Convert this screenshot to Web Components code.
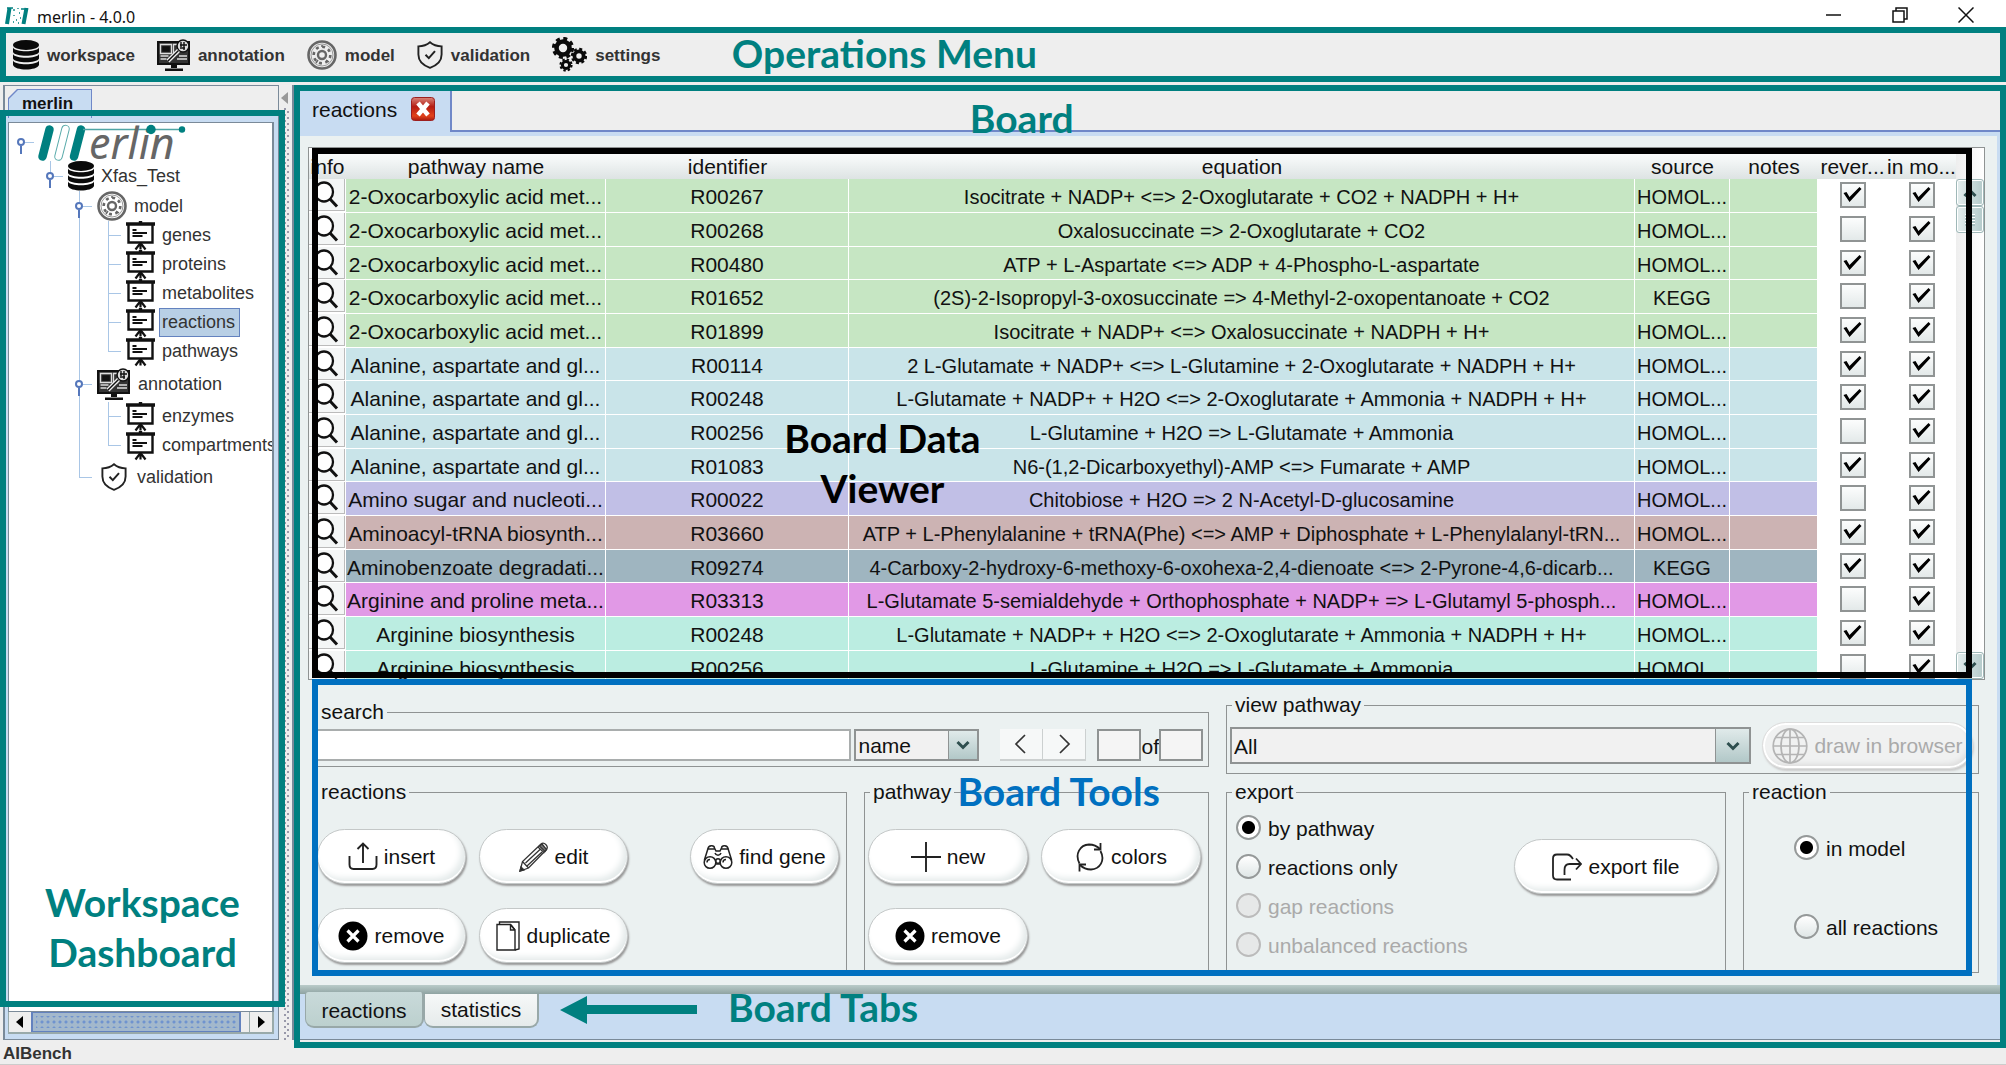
<!DOCTYPE html>
<html lang="en">
<head>
<meta charset="utf-8">
<title>merlin - 4.0.0</title>
<style>
  html, body { margin: 0; height: 100%; }
  body {
    font: 21px/24px "Liberation Sans", Arial, sans-serif;
    color: #111; background: #eee;
    --teal: #008080; --blue: #0070c0; --sky: #c8dcf2; --line: #7088c8;
    --panel: #ebf1f1; --edge: #8f9393;
  }
</style>
</head>
<body>
<merlin-app></merlin-app>
<script>
const ICONS = {
  database: [26, 30, `<g fill="#0a0a0a"><ellipse cx="13" cy="5" rx="13" ry="5"/><path d="M0 7.500c2 5 24 5 26 0v4.500c-2 5-24 5-26 0z"/><path d="M0 14c2 5 24 5 26 0v4.500c-2 5-24 5-26 0z"/><path d="M0 20.500c2 5 24 5 26 0v4.500c-2 6-24 6-26 0z"/></g>`],
  annotation: [33, 32, `<path d="M1 3h31v22H1z" fill="#333"/><g fill="none" stroke="#111" stroke-width="1.600"><path d="M1 3h31v22H1z" stroke-width="2"/><path d="M3.500 5.500h11v9h-11zM16.500 5.500h4v9h-4zM3.500 17h8M3.500 20h6M20 20h10M22 17h8" stroke="#ddd" stroke-width="1.300"/><path d="M6 8h6v4H6z" fill="#111"/><circle cx="26" cy="7" r="6" fill="#ddd"/><path d="M21.500 11.500 11 22" stroke="#eee" stroke-width="4"/><path d="M21.500 11.500 11 22" stroke="#111" stroke-width="1.500"/><path d="M24 3v5M27 3v8M30 6h-7M23 9h5" stroke-width="1.400"/></g><path d="M14 26h6v3h-6zM8 29.500h18V32H8z" fill="#111"/>`],
  model: [30, 30, `<g fill="none" stroke="#666"><circle cx="15" cy="15" r="13.500" stroke-width="2.600"/><circle cx="15" cy="15" r="11" stroke="#999" stroke-width="1"/><circle cx="15" cy="15" r="4" stroke-width="2.400"/><g stroke-width="2.600"><circle cx="15" cy="15" r="8.300" stroke-dasharray="3 3.500"/></g><path d="M11 20l-2 3M19 20l3 2M15 5v2" stroke-width="1.500"/></g>`],
  shield: [26, 28, `<path d="M13 1.200c3 2.600 7 4 11.600 4.200v8.200c0 6.600-5 11-11.600 13.200C6.400 24.600 1.400 20.200 1.400 13.600V5.400C6 5.200 10 3.800 13 1.200z" fill="none" stroke="#222" stroke-width="1.900"/><path d="M8.500 13.800l3.300 3.300 6.200-7" fill="none" stroke="#222" stroke-width="2"/>`],
  gears: [35, 35, `<g fill="none" stroke="#0a0a0a"><circle cx="11" cy="11" r="6.500" stroke-width="4.600"/><circle cx="11" cy="11" r="9.600" stroke-width="3" stroke-dasharray="4 3.540"/><circle cx="27" cy="19" r="4.600" stroke-width="3.800"/><circle cx="27" cy="19" r="7" stroke-width="2.400" stroke-dasharray="3 2.500"/><circle cx="14" cy="28" r="3.600" stroke-width="3"/><circle cx="14" cy="28" r="5.600" stroke-width="2" stroke-dasharray="2.400 2"/></g>`],
  board: [29, 29, `<g fill="none" stroke="#111"><path d="M0 3h29M14.500 0v3" stroke-width="3.400"/><path d="M2.500 4v17.500h24V4" stroke-width="2.400"/><path d="M6.500 9h4M6.500 12h14.500M6.500 15h10" stroke-width="1.800"/><path d="M9.500 28.500l4.500-6h1l4.500 6M14.500 22v6.500" stroke-width="2.200"/></g>`],
  logo: [150, 37, `<g stroke-linecap="round"><path d="M10.500 5.500 3.500 32.500M42 5.500 35 32.500" stroke="#008080" stroke-width="8.500"/><path d="M26.500 5 19.500 32.500" stroke="#5aabab" stroke-width="8.500"/><path d="M26.500 5 19.500 32.500" stroke="#fff" stroke-width="6.500"/></g><path d="M44 5.500h99" stroke="#4fa5a5" stroke-width="1.500"/><text x="50" y="35" font-family="Noto Sans, sans-serif" font-style="italic" font-size="43" fill="#666">erlin</text><circle cx="112" cy="5.500" r="4.700" fill="#008080"/><circle cx="143" cy="5.500" r="3.200" fill="#008080"/>`],
  app: [24, 18, `<g fill="none" stroke="#008080"><path d="M4.500 1 2 17M21.500 1 18.500 17" stroke-width="4"/><path d="M9 2v2M13 1v1M9 8v1M11 13h1M14 6h1M15 11h1M8 15h1M13 16h1" stroke-width="1.300"/><path d="M2 1h6M16 2h7" stroke-width="1.600"/></g>`],
  insert: [30, 30, `<g fill="none" stroke="#222" stroke-width="1.900"><path d="M1.500 14v8.500c0 3 1 4.500 4 4.500h19c3 0 4-1.500 4-4.500V14"/><path d="M15 21V2M9.500 7 15 1.500 20.500 7"/></g>`],
  edit: [30, 30, `<g fill="none" stroke="#333" stroke-width="1.300"><path d="M1 29l2.500-9.500L22 2c3-2.500 8 2 5.500 5.500L9.500 26zM3.500 19.500l6 6.500M19 5l6.500 6M6.500 21 21 7.500M8 24 23 10"/><path d="M1 29l1-4 3 3z" fill="#222"/><path d="M20.500 4l5.500 5.500 1.500-2L23 2z" fill="#777"/></g>`],
  find: [30, 26, `<g fill="none" stroke="#222" stroke-width="1.500"><circle cx="7" cy="18.500" r="5.800"/><circle cx="23" cy="18.500" r="5.800"/><circle cx="15" cy="17" r="2.300"/><path d="M1.400 16 5 4.500c.5-3 6-4 6.500-.5L13 7h4l1.500-3c.5-3.500 6-2.500 6.500.5L28.600 16M5 5h7M18 5h7M12 9c1 3 5 3 6 0M4 18.500c0-2 1-3 3-3M20 18.500c0-2 1-3 3-3M12.500 20h5"/></g>`],
  remove: [30, 30, `<circle cx="15" cy="15" r="14.500" fill="#000"/><path d="M9.500 9.500l11 11M20.500 9.500l-11 11" stroke="#fff" stroke-width="3.200"/>`],
  duplicate: [24, 30, `<g fill="none" stroke="#222" stroke-width="1.400"><path d="M1 3.500h13.500L19 9v20H1z"/><path d="M3.500 3V1H23v27l-4 1M14.500 3.500V9H19M15 4l4 5"/></g>`],
  plus: [30, 30, `<path d="M15 0v30M0 15h30" stroke="#222" stroke-width="1.900"/>`],
  colors: [30, 30, `<g fill="none" stroke="#222" stroke-width="1.800"><path d="M4.500 21.500C-.5 12 5 3 14 2.500c5 0 8 1.500 11 4.500M25.500 9c5 9.500-.5 18-9.500 18.500-5 0-8-1.500-11-4.500"/><path d="M25.500 1v6.500H19M4.500 29.500v-7H11"/></g>`],
  exportfile: [30, 28, `<g fill="none" stroke="#222" stroke-width="1.800"><path d="M21 6c-2-3-3-4.500-6-4.500H5C2 1.500 1 2.500 1 5.500v17c0 3 1 4 4 4h14"/><path d="M12.500 22v-5c0-4 1.500-6 5-6H29M24 5.500l5 5.500-5 5.500"/></g>`],
  globe: [36, 36, `<g fill="none" stroke="#b4b4b4" stroke-width="1.700"><circle cx="18" cy="18" r="16.800"/><ellipse cx="18" cy="18" rx="9" ry="16.800"/><path d="M18 1v34M1 18h34M4 9.500h28M4 26.500h28"/></g>`],
  close: [24, 24, `<defs><linearGradient id="r" x2="0" y2="1"><stop stop-color="#d9857a"/><stop offset=".4" stop-color="#b51c12"/><stop offset=".8" stop-color="#e2431c"/><stop offset="1" stop-color="#a81a10"/></linearGradient></defs><rect x=".5" y=".5" width="23" height="23" rx="3" fill="url(#r)" stroke="#9c1f1f"/><path d="M7 6l10 12M17 6 7 18" stroke="#fff" stroke-width="4.500"/>`],
  search: [30, 30, `<ellipse cx="12" cy="12" rx="9" ry="9.500" fill="#fff" stroke="#111" stroke-width="2.300"/><path d="M17.500 18.500 25 26.500" stroke="#111" stroke-width="3"/>`],
  left: [16, 20, `<path d="M12 1 3 10l9 9" fill="none" stroke="#333" stroke-width="1.700"/>`],
  right: [16, 20, `<path d="M4 1l9 9-9 9" fill="none" stroke="#333" stroke-width="1.700"/>`],
  chevron: [14, 10, `<path d="M1.500 2 7 7.500 12.500 2" fill="none" stroke="#2f4f4f" stroke-width="3"/>`],
  up: [14, 10, `<path d="M1.500 8 7 2.500 12.500 8" fill="none" stroke="#2f4f4f" stroke-width="3"/>`],
  minimize: [16, 16, `<path d="M0 8h15" stroke="#111" stroke-width="1.500"/>`],
  restore: [16, 16, `<path d="M1 4h11v11H1zM4 4V1h11v11h-3" fill="none" stroke="#111" stroke-width="1.500"/>`],
  quit: [16, 16, `<path d="M.5.500l15 15M15.500.500l-15 15" stroke="#111" stroke-width="1.500"/>`]
};
const icon = n => { const [w, h, s] = ICONS[n]; return `<svg width="${w}" height="${h}" viewBox="0 0 ${w} ${h}" aria-hidden="true">${s}</svg>`; };

function define(tag, css, html) {
  customElements.define(tag, class extends HTMLElement {
    connectedCallback() {
      if (this.shadowRoot) return;
      const t = document.createElement("template");
      t.innerHTML = `<style>*{box-sizing:border-box}svg{display:block;flex:none}button{font:inherit;color:inherit;margin:0;padding:0;border:0;background:none}${css}</style>` +
        (typeof html === "function" ? html(this) : html);
      this.attachShadow({ mode: "open" }).append(t.content.cloneNode(true));
    }
  });
}

/* Coloured outline with a caption, laid over the region that it names */
define("region-frame", `
  :host{position:absolute;z-index:3;box-sizing:border-box;border:6px solid var(--tone);pointer-events:none;color:var(--tone)}
  ::slotted(*){position:absolute;font:700 39px/50px Lato,Carlito,sans-serif;white-space:nowrap;text-align:center}
`, `<slot></slot>`);

define("title-bar", `
  :host{display:flex;align-items:center;height:27px;background:#fff;padding:0 32px 0 5px;font:16px/24px "Noto Sans","Open Sans",sans-serif;color:#111}
  .name{flex:1;margin-left:8px;padding-top:7px}
  .icon{padding-top:5px}
  nav{display:flex;gap:50px;padding-top:2px}
`, () => `<span class="icon">${icon("app")}</span><span class="name">merlin - 4.0.0</span>
  <nav><button aria-label="minimize">${icon("minimize")}</button><button aria-label="restore">${icon("restore")}</button><button aria-label="close">${icon("quit")}</button></nav>`);

define("menu-item", `
  :host{display:block}
  button{display:flex;align-items:center;gap:8px;font:700 17px/24px "Liberation Sans",sans-serif;color:#333}
  span{padding-top:2px}
`, el => `<button>${icon(el.getAttribute("icon"))}<span><slot></slot></span></button>`);

define("operations-menu", `
  :host{display:flex;align-items:center;gap:22px;position:relative;box-sizing:border-box;height:55px;padding:0 13px;background:#eee}
  region-frame{--tone:var(--teal);inset:0}
  b{left:36.4%;top:-5px}
`, `<menu-item icon="database">workspace</menu-item><menu-item icon="annotation">annotation</menu-item><menu-item icon="model">model</menu-item><menu-item icon="shield">validation</menu-item><menu-item icon="gears">settings</menu-item>
  <region-frame><b>Operations Menu</b></region-frame>`);

define("tree-node", `
  :host{display:block;position:relative;--row:29px}
  :host([icon=logo]){--row:38px}
  :host([icon=database]),:host([icon=model]){--row:30px}
  :host([icon=annotation]){--row:36px}
  :host([icon=shield]){--row:34px}
  :host(:not([root]))::before{content:"";position:absolute;left:0;top:0;bottom:0;border-left:1px solid #a9c6e6}
  :host(:not([root]):last-child)::before{bottom:auto;height:calc(var(--row) / 2)}
  .row{display:flex;align-items:center;height:var(--row)}
  .stub{flex:none;width:13px;border-top:1px solid #a9c6e6;margin-right:5px}
  .row svg{overflow:visible}
  .knob{position:absolute;left:-4px;top:calc(var(--row) / 2 - 4px);width:8px;height:16px}
  .label{font-size:18px;line-height:27px;color:#333;padding:0 4px 0 2px;margin-left:4px;border:1px solid transparent;white-space:nowrap}
  :host([selected]) .label{background:#b8cfe5;border-color:#6382bf}
  :host([icon=annotation]) .label{margin-left:5px}
  :host([icon=shield]) .stub{margin-right:9px}
  :host([icon=shield]) .label{margin-left:7px}
  .kids{padding-left:29px}
`, el => `<div class="row">${el.hasAttribute("open") ? `<svg class="knob" viewBox="0 0 8 16"><path d="M4 8v8" stroke="#5577bb" stroke-width="2"/><circle cx="4" cy="4" r="3" fill="#fff" stroke="#5577bb" stroke-width="2"/></svg>` : ""}<span class="stub"></span>${icon(el.getAttribute("icon"))}${el.getAttribute("label") ? `<span class="label">${el.getAttribute("label")}</span>` : ""}</div><div class="kids"><slot></slot></div>`);

define("workspace-dashboard", `
  :host{display:flex;flex-direction:column;position:relative;box-sizing:border-box;width:276px;margin-left:3px;border:solid #7a8a99;border-width:1px 1px 1px 2px}
  .strip{display:flex;height:31px;padding:3px 0 0 3px;border-bottom:1px solid var(--line);margin-bottom:-1px}
  .tab{width:84px;height:29px;background:var(--line);clip-path:polygon(9px 0,100% 0,100% 100%,0 100%,0 9px);padding:1px 1px 0;z-index:1}
  .tab span{display:block;height:28px;background:var(--sky);clip-path:polygon(9px 0,100% 0,100% 100%,0 100%,0 9px);font:700 17px/27px "Liberation Sans",sans-serif;padding-left:13px}
  .body{flex:1;min-height:0;display:flex;flex-direction:column;background:var(--sky);padding:6px 4px 5px 3px}
  .tree{flex:1;min-height:0;overflow:hidden;background:#fff;border:1px solid #7a8a99;border-width:1px 2px 1px 1px;padding-left:12px}
  .bar{display:flex;height:22px;background:#eee;border:solid #9aa;border-width:0 2px 2px 1px}
  .bar button{width:22px;display:grid;place-items:center}
  .thumb{flex:1;border:1px solid #6382bf;border-width:1px 2px;background:radial-gradient(circle,#6f93cf 1px,transparent 2px) 0 0/6px 6px,#a3b8cc;box-shadow:inset 0 0 0 3px #a3b8cc}
  .rest{width:9px;border-right:1px solid #9aa}
  region-frame{--tone:var(--teal);inset:24px -7px 32px -5px}
  b{left:0;right:0;bottom:24px;white-space:normal!important;padding:0 30px}
`, `<div class="strip"><div class="tab"><span>merlin</span></div></div>
  <div class="body"><div class="tree">
    <tree-node root open icon="logo">
      <tree-node open icon="database" label="Xfas_Test">
        <tree-node open icon="model" label="model">
          <tree-node icon="board" label="genes"></tree-node><tree-node icon="board" label="proteins"></tree-node><tree-node icon="board" label="metabolites"></tree-node><tree-node icon="board" label="reactions" selected></tree-node><tree-node icon="board" label="pathways"></tree-node>
        </tree-node>
        <tree-node open icon="annotation" label="annotation">
          <tree-node icon="board" label="enzymes"></tree-node><tree-node icon="board" label="compartments"></tree-node>
        </tree-node>
        <tree-node icon="shield" label="validation"></tree-node>
      </tree-node>
    </tree-node></div>
    <div class="bar"><button aria-label="scroll left"><svg width="8" height="12"><path d="M7 0v12L0 6z"/></svg></button><div class="thumb"></div><div class="rest"></div><button aria-label="scroll right"><svg width="8" height="12"><path d="M1 0v12l7-6z"/></svg></button></div>
  </div>
  <region-frame><b>Workspace Dashboard</b></region-frame>`);

define("split-divider", `
  :host{display:flex;flex-direction:column;width:13px;background:#eee}
  svg{margin:7px 0 4px 2px}
  div{flex:1;margin:0 2px 0 5px;background:radial-gradient(circle at 1px 1px,#99a 1px,transparent 1px) 0 0/6px 6px,radial-gradient(circle at 1px 1px,#99a 1px,transparent 1px) 3px 3px/6px 6px}
`, `<svg width="7" height="12"><path d="M7 0v12L0 6z" fill="#999"/></svg><div></div>`);

/* [pathway, id, equation, source, reversible, colour] */
const G = "#c6e6c3", B = "#c9e4e9", P = "#c1bfe6", M = "#bbede1";
const OX = "2-Oxocarboxylic acid met...", AL = "Alanine, aspartate and gl...", H = "HOMOL...";
const ROWS = [
  [OX, "R00267", "Isocitrate + NADP+ <=> 2-Oxoglutarate + CO2 + NADPH + H+", H, 1, G],
  [OX, "R00268", "Oxalosuccinate => 2-Oxoglutarate + CO2", H, 0, G],
  [OX, "R00480", "ATP + L-Aspartate <=> ADP + 4-Phospho-L-aspartate", H, 1, G],
  [OX, "R01652", "(2S)-2-Isopropyl-3-oxosuccinate => 4-Methyl-2-oxopentanoate + CO2", "KEGG", 0, G],
  [OX, "R01899", "Isocitrate + NADP+ <=> Oxalosuccinate + NADPH + H+", H, 1, G],
  [AL, "R00114", "2 L-Glutamate + NADP+ <=> L-Glutamine + 2-Oxoglutarate + NADPH + H+", H, 1, B],
  [AL, "R00248", "L-Glutamate + NADP+ + H2O <=> 2-Oxoglutarate + Ammonia + NADPH + H+", H, 1, B],
  [AL, "R00256", "L-Glutamine + H2O => L-Glutamate + Ammonia", H, 0, B],
  [AL, "R01083", "N6-(1,2-Dicarboxyethyl)-AMP <=> Fumarate + AMP", H, 1, B],
  ["Amino sugar and nucleoti...", "R00022", "Chitobiose + H2O => 2 N-Acetyl-D-glucosamine", H, 0, P],
  ["Aminoacyl-tRNA biosynth...", "R03660", "ATP + L-Phenylalanine + tRNA(Phe) <=> AMP + Diphosphate + L-Phenylalanyl-tRN...", H, 1, "#ccb3b3"],
  ["Aminobenzoate degradati...", "R09274", "4-Carboxy-2-hydroxy-6-methoxy-6-oxohexa-2,4-dienoate <=> 2-Pyrone-4,6-dicarb...", "KEGG", 1, "#9fb5c0"],
  ["Arginine and proline meta...", "R03313", "L-Glutamate 5-semialdehyde + Orthophosphate + NADP+ => L-Glutamyl 5-phosph...", H, 0, "#e199e6"],
  ["Arginine biosynthesis", "R00248", "L-Glutamate + NADP+ + H2O <=> 2-Oxoglutarate + Ammonia + NADPH + H+", H, 1, M],
  ["Arginine biosynthesis", "R00256", "L-Glutamine + H2O => L-Glutamate + Ammonia", H, 0, M]
];
const esc = s => s.replace(/</g, "&lt;").replace(/>/g, "&gt;");

define("reaction-table", `
  :host{display:flex;position:relative;flex:1 1 0;min-height:0;border:1px solid var(--edge);background:#fff}
  .view{flex:1;min-width:0;overflow:hidden}
  table{width:100%;border-collapse:separate;border-spacing:0;table-layout:fixed;font-size:21px}
  th{height:31px;padding:6px 0 0;font-weight:400;line-height:24px;white-space:nowrap;background:linear-gradient(#fff,#f3f6f6 40%,#dde3e3)}
  tbody tr{height:34px} tbody tr:nth-child(3n){height:33px}
  td{padding:3px 0 0;text-align:center;line-height:24px;white-space:nowrap;overflow:hidden;background:var(--c);border:solid #fff;border-width:0 1px 1px 0}
  td:nth-child(n+4){font-size:20px}
  td.i,td.c{background:#fff;vertical-align:top}
  td.i{padding:0}
  td.i button{display:block;width:100%;height:32px;background:#f4f6f6;border:solid #bbb;border-width:0 1px 1px 0;padding-left:3px}
  td.c{border:0}
  input{appearance:none;display:block;margin:0 auto;width:26px;height:26px;border:2px solid #909494;background:linear-gradient(#fcfdfd,#e3e9e9)}
  input:checked::before{content:"";display:block;width:20px;height:20px;background:#000;clip-path:polygon(2px 9px,5px 8px,8px 13px,18px 3px,20px 5px,8px 18px)}
  .scroll{width:28px;display:flex;flex-direction:column;padding-top:31px;background:linear-gradient(90deg,#eee,#fff)}
  .scroll button,.grip{height:27px;display:grid;place-items:center;border:1px solid #9fb8b8;background:linear-gradient(90deg,#e3ecec,#b4caca);border-radius:3px;box-shadow:inset 0 0 0 1px #fff}
  .grip i{width:10px;height:12px;background:repeating-linear-gradient(#fff 0 1px,#a9c0c0 1px 3px)}
  .scroll span{flex:1}
  region-frame{--tone:#000;inset:0 12px 1px 3px}
  b{left:calc(32% - 68px);top:259px;white-space:normal!important;width:210px}
`, () => `<div class="view"><table>
  <colgroup><col style="width:37px"><col style="width:260px"><col style="width:243px"><col><col style="width:95px"><col style="width:88px"><col style="width:69px"><col style="width:69px"></colgroup>
  <thead><tr>${["info", "pathway name", "identifier", "equation", "source", "notes", "rever...", "in mo..."].map(t => `<th>${t}</th>`).join("")}</tr></thead>
  <tbody>${ROWS.map(r => `<tr style="--c:${r[5]}"><td class="i"><button aria-label="info">${icon("search")}</button></td>${r.slice(0, 4).map(t => `<td>${esc(t)}</td>`).join("")}<td></td><td class="c"><input type="checkbox" aria-label="reversible"${r[4] ? " checked" : ""}></td><td class="c"><input type="checkbox" aria-label="in model" checked></td></tr>`).join("")}</tbody></table></div>
  <div class="scroll"><button aria-label="scroll up">${icon("up")}</button><div class="grip"><i></i></div><span></span><button aria-label="scroll down">${icon("chevron")}</button></div>
  <region-frame><b>Board Data Viewer</b></region-frame>`);

define("group-box", `
  :host{display:block;min-width:0}
  fieldset{height:100%;margin:0;min-width:0;border:1px solid var(--edge);padding:0}
  legend{margin-left:5px;padding:0 3px;line-height:24px}
`, el => `<fieldset><legend>${el.getAttribute("label")}</legend><slot></slot></fieldset>`);

define("pill-button", `
  :host{display:block}
  button{display:flex;align-items:center;justify-content:center;gap:6px;width:100%;height:55px;border-radius:28px;background:#fff;border:1px solid #c4c8c8;box-shadow:inset 0 -2px 0 #fff,inset -4px -5px 6px #e4eaea,1px 2px 2px #999;white-space:nowrap}
  :host([disabled]) button{height:47px;color:#aaa;background:#f0f1f1;border-color:#ddd;box-shadow:inset 0 0 0 2px #fff,inset -3px -4px 5px #ddd,1px 2px 2px #ccc}
`, el => `<button${el.hasAttribute("disabled") ? " disabled" : ""}>${icon(el.getAttribute("icon"))}<slot></slot></button>`);

define("drop-down", `
  :host{display:grid}
  select,span{grid-area:1/1}
  select{appearance:none;width:100%;font:inherit;color:#111;border:2px solid var(--edge);border-radius:0;background:#f1f1f1;margin:0;padding:2px 0 0 2px;height:100%}
  span{justify-self:end;display:grid;place-items:center;border:2px solid var(--edge);border-left-width:1px;background:linear-gradient(#e0eaea,#b2c8c8);pointer-events:none;width:var(--arrow,31px)}
`, el => `<select aria-label="${el.getAttribute("name")}"><option>${el.getAttribute("value")}</option></select><span>${icon("chevron")}</span>`);

define("radio-list", `
  :host{display:block}
  label{display:flex;align-items:center;gap:7px;height:var(--row,39px);white-space:nowrap}
  label.off{color:#aaa}
  input{appearance:none;margin:0;width:25px;height:25px;flex:none;border:2px solid #959999;border-radius:50%;background:linear-gradient(#fff,#dfe6e6)}
  input:checked{background:radial-gradient(circle,#000 6px,#fff 7px)}
  input:disabled{border-color:#bbb;background:#e6e8e8}
  span{padding-top:3px}
`, el => el.getAttribute("options").split("|").map((o, i) => { const off = o.startsWith("-"); return `<label class="${off ? "off" : ""}"><input type="radio" name="r"${i ? "" : " checked"}${off ? " disabled" : ""}><span>${o.replace(/^-/, "")}</span></label>`; }).join(""));

define("board-tools", `
  :host{display:grid;position:relative;grid-template-columns:535fr 345fr 500fr 236fr;gap:6px 17px;margin:13px 6px 0 4px}
  .wide{grid-column:span 2;align-self:center}
  .search{display:flex;height:42px;padding:5px 5px}
  .search input{font:inherit;border:2px solid #a9adad;background:#fff;margin:0;padding:0 4px;min-width:0}
  .search .q{flex:1;margin:0 3px 0 -4px}
  .search .n{width:44px;background:#f5f5f5;border-color:var(--edge)}
  .search drop-down{width:125px;margin-right:21px}
  .search button{width:43px;display:grid;place-items:center;background:#f6f8f8;border:solid #ccd0d0;border-width:0 1px 2px 0}
  .search button + button{margin-right:11px}
  .search label{display:flex;align-items:center;padding-top:3px}
  .view{display:flex;align-items:center;gap:11px;padding:5px 5px 4px 3px}
  .view drop-down{flex:1;height:37px;--arrow:36px}
  .view pill-button{width:211px}
  .three{display:grid;grid-template-columns:149px 149px 1fr;gap:24px 13px;padding:25px 7px 6px 4px}
  .three :nth-child(3){justify-self:end;width:149px}
  .two{display:grid;grid-template-columns:160px 160px;gap:24px 13px;padding:25px 7px 6px 3px}
  .export{display:flex;justify-content:space-between;padding:4px 7px 6px 9px}
  .export pill-button{width:204px;padding-top:31px}
  .model{padding:4px 0 6px 50px;--row:79px}
  region-frame{--tone:var(--blue);inset:-14px 7px -3px 0}
  region-frame b{left:38.8%;top:81px}
`, `<group-box class="wide" label="search"><div class="search"><input class="q" type="text" aria-label="search"><drop-down name="search field" value="name"></drop-down><button aria-label="previous">${icon("left")}</button><button aria-label="next">${icon("right")}</button><input class="n" id="n" type="text" aria-label="match"><label for="t">of</label><input class="n" id="t" type="text"></div></group-box>
  <group-box class="wide" label="view pathway"><div class="view"><drop-down name="view pathway" value="All"></drop-down><pill-button disabled icon="globe">draw in browser</pill-button></div></group-box>
  <group-box label="reactions"><div class="three"><pill-button icon="insert">insert</pill-button><pill-button icon="edit">edit</pill-button><pill-button icon="find">find gene</pill-button><pill-button icon="remove">remove</pill-button><pill-button icon="duplicate">duplicate</pill-button></div></group-box>
  <group-box label="pathway"><div class="two"><pill-button icon="plus">new</pill-button><pill-button icon="colors">colors</pill-button><pill-button icon="remove">remove</pill-button></div></group-box>
  <group-box label="export"><div class="export"><radio-list options="by pathway|reactions only|-gap reactions|-unbalanced reactions"></radio-list><pill-button icon="exportfile">export file</pill-button></div></group-box>
  <group-box label="reaction"><div class="model"><radio-list options="in model|all reactions"></radio-list></div></group-box>
  <region-frame><b>Board Tools</b></region-frame>`);

define("board-tabs", `
  :host{display:block;position:relative;background:var(--sky);height:54px}
  .rule{height:9px;background:linear-gradient(#b9cbc9,#8fa3a2)}
  nav{display:flex;padding-left:11px}
  button{width:115px;height:34px;border:1px solid #98a8a8;border-top:0;border-width:0 2px 2px 1px;border-radius:0 0 9px 9px;background:linear-gradient(#f6f8f8,#e6ebeb);padding:0}
  .on{position:relative;width:119px;height:36px;margin-top:-2px;background:linear-gradient(#c9dada,#bcd0ce);padding-top:3px;border-radius:3px 3px 9px 9px}
  svg{position:absolute;left:266px;top:11px}
  b{position:absolute;left:434px;top:-3px;font:700 39px/50px Lato,Carlito,sans-serif;color:var(--teal)}
`, `<div class="rule"></div><nav><button class="on">reactions</button><button>statistics</button></nav>
  <svg width="137" height="28"><path d="M0 14 27 0v9h110v9H27v10z" fill="#008080"/></svg><b>Board Tabs</b>`);

define("board-panel", `
  :host{display:flex;flex-direction:column;position:relative;flex:1;min-width:0;box-sizing:border-box;border:solid #7a8a99;border-width:1px 0 1px 2px}
  .strip{display:flex;height:46px;border-bottom:2px solid var(--line);background:#eee}
  .tab{display:flex;align-items:center;gap:14px;width:158px;height:46px;padding-left:18px;background:var(--sky);border-right:2px solid var(--line);padding-top:2px}
  .tab button{margin-top:-2px}
  .page{flex:1;min-height:0;display:flex;flex-direction:column;border:solid var(--sky);border-width:4px 9px 0 0;background:var(--panel)}
  .content{flex:1;min-height:0;display:flex;flex-direction:column;padding:11px 12px 12px 14px}
  region-frame{--tone:var(--teal);inset:-1px 0 -9px 0}
  region-frame b{left:39.4%;top:2px}
`, `<div class="strip"><div class="tab">reactions<button aria-label="close tab">${icon("close")}</button></div></div>
  <div class="page"><div class="content"><reaction-table></reaction-table><board-tools></board-tools></div></div><board-tabs></board-tabs>
  <region-frame><b>Board</b></region-frame>`);

define("status-bar", `
  :host{display:block;height:25px;box-sizing:border-box;border-bottom:1px solid #ccc;background:#eee;padding:3px 3px 0;font:700 17px/22px "Liberation Sans",sans-serif;color:#333}
`, `<slot></slot>`);

define("merlin-app", `
  :host{display:flex;flex-direction:column;height:100vh;min-height:1000px;overflow:hidden}
  main{flex:1;min-height:0;display:flex;margin-top:3px}
`, `<title-bar></title-bar><operations-menu></operations-menu>
  <main><workspace-dashboard></workspace-dashboard><split-divider></split-divider><board-panel></board-panel></main>
  <status-bar>AIBench</status-bar>`);
</script>
</body>
</html>
